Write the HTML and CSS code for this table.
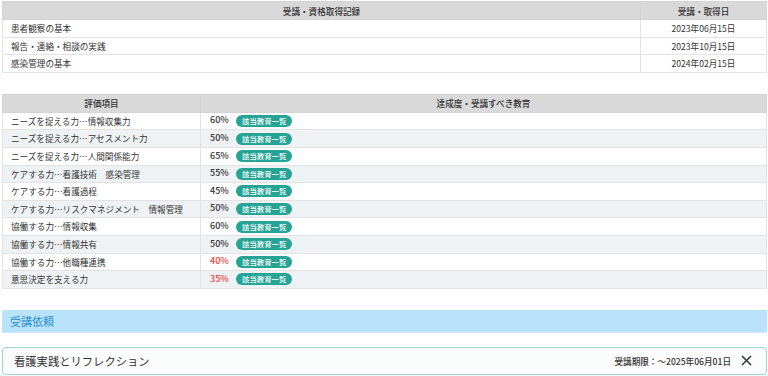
FILE: index.html
```html
<!DOCTYPE html>
<html lang="ja">
<head>
<meta charset="utf-8">
<link rel="stylesheet" href="styles.css">
</head>
<body>
<div class="page">
  <table class="tbl records">
    <thead>
      <tr><th>受講・資格取得記録</th><th class="date">受講・取得日</th></tr>
    </thead>
    <tbody>
      <tr><td>患者観察の基本</td><td class="date">2023年06月15日</td></tr>
      <tr><td>報告・連絡・相談の実践</td><td class="date">2023年10月15日</td></tr>
      <tr><td>感染管理の基本</td><td class="date">2024年02月15日</td></tr>
    </tbody>
  </table>

  <table class="tbl eval">
    <thead>
      <tr><th class="item">評価項目</th><th>達成度・受講すべき教育</th></tr>
    </thead>
    <tbody>
      <tr><td>ニーズを捉える力…情報収集力</td><td><span class="pct">60%</span><span class="badge">該当教育一覧</span></td></tr>
      <tr><td>ニーズを捉える力…アセスメント力</td><td><span class="pct">50%</span><span class="badge">該当教育一覧</span></td></tr>
      <tr><td>ニーズを捉える力…人間関係能力</td><td><span class="pct">65%</span><span class="badge">該当教育一覧</span></td></tr>
      <tr><td>ケアする力…看護技術　感染管理</td><td><span class="pct">55%</span><span class="badge">該当教育一覧</span></td></tr>
      <tr><td>ケアする力…看護過程</td><td><span class="pct">45%</span><span class="badge">該当教育一覧</span></td></tr>
      <tr><td>ケアする力…リスクマネジメント　情報管理</td><td><span class="pct">50%</span><span class="badge">該当教育一覧</span></td></tr>
      <tr><td>協働する力…情報収集</td><td><span class="pct">60%</span><span class="badge">該当教育一覧</span></td></tr>
      <tr><td>協働する力…情報共有</td><td><span class="pct">50%</span><span class="badge">該当教育一覧</span></td></tr>
      <tr><td>協働する力…他職種連携</td><td><span class="pct low">40%</span><span class="badge">該当教育一覧</span></td></tr>
      <tr><td>意思決定を支える力</td><td><span class="pct low">35%</span><span class="badge">該当教育一覧</span></td></tr>
    </tbody>
  </table>

  <div class="section-bar">受講依頼</div>

  <div class="request-card">
    <div class="req-title">看護実践とリフレクション</div>
    <div class="req-right">
      <span class="deadline">受講期限：～2025年06月01日</span>
      <svg class="close" width="11" height="11" viewBox="0 0 11 11"><path d="M1 1L10 10M10 1L1 10" stroke="#333" stroke-width="1.5" fill="none"/></svg>
    </div>
  </div>
</div>
</body>
</html>
```
FILE: styles.css
```css
* { box-sizing: border-box; }
html, body { margin: 0; padding: 0; background: #fff; }
body {
  font-family: "Noto Sans CJK JP", "Noto Sans", sans-serif;
  color: #333;
  font-size: 10px;
}
.page {
  padding: 1px 1px 0 2px;
  width: 768px;
  height: 376px;
  overflow: hidden;
}
.tbl {
  width: 100%;
  border-collapse: collapse;
  table-layout: fixed;
  font-size: 8.6px;
}
.tbl th {
  background: #d9d9d9;
  font-weight: 500;
  height: 18px;
  padding: 0 8px;
  text-align: center;
  border: 1px solid #d4d4d4;
  white-space: nowrap;
}
.tbl td {
  height: 17.6px;
  padding: 0 8px;
  border: 1px solid #e3e3e3;
  line-height: 1;
  white-space: nowrap;
}
.records .date { width: 126px; text-align: center; }
.eval { margin-top: 21px; }
.eval .item { width: 198px; }
.eval tbody tr:nth-child(even) td { background: #eef2f4; }
.eval td:nth-child(2) { padding-left: 9px; }
.pct { display: inline-block; width: 26px; font-weight: 500; font-size: 9px; }
.pct.low { color: #f03c3c; }
.badge {
  display: inline-block;
  background: #25a495;
  color: #fff;
  font-size: 7.4px;
  line-height: 12px;
  height: 12px;
  padding: 0 6px;
  border-radius: 6px;
  vertical-align: middle;
  font-weight: 500;
}
.section-bar {
  margin-top: 21px;
  background: #b9e3fb;
  color: #2e8fd2;
  font-size: 11px;
  height: 23px;
  line-height: 23px;
  padding-left: 8px;
  border-bottom: 1px solid #cde9fb;
}
.request-card {
  margin-top: 14px;
  border: 1px solid #9bd6d0;
  border-radius: 4px;
  background: #fbfcfc;
  height: 28px;
  display: flex;
  align-items: center;
  justify-content: space-between;
  padding: 0 14px 0 11px;
}
.req-title { font-size: 11.3px; color: #333; }
.req-right { display: flex; align-items: center; gap: 10px; }
.deadline { font-size: 8.6px; font-weight: 500; }
.close { display: block; }
```
